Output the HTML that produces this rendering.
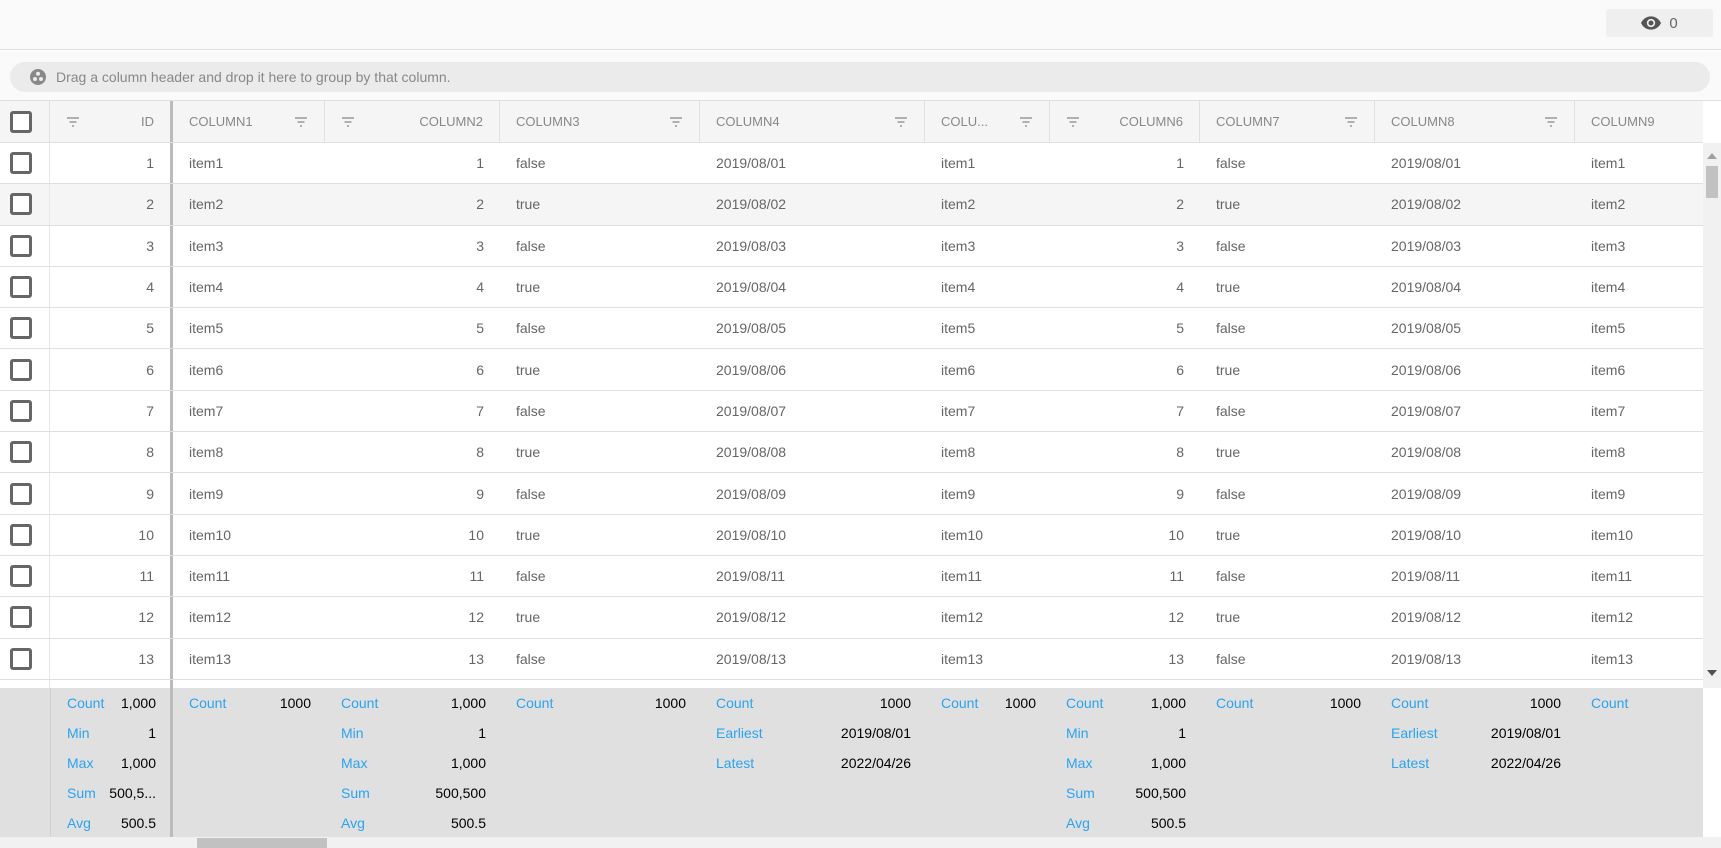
<!DOCTYPE html>
<html><head><meta charset="utf-8"><style>
*{box-sizing:border-box;margin:0;padding:0}
body{width:1721px;height:848px;overflow:hidden;background:#fff;font-family:"Liberation Sans",sans-serif;font-size:14px;color:#666;position:relative}
.top{position:absolute;left:0;top:0;width:1721px;height:50px;background:#fafafa;border-bottom:1px solid #e0e0e0}
.eye{position:absolute;left:1606px;top:9px;width:107px;height:28px;background:#efefef;border-radius:3px;display:flex;align-items:center;justify-content:center;gap:8px;color:#666;font-size:15px}
.grp{position:absolute;left:0;top:51px;width:1721px;height:50px;background:#fafafa;border-bottom:1px solid #e0e0e0}
.pill{position:absolute;left:10px;top:11px;width:1700px;height:30px;background:#ebebeb;border-radius:15px;display:flex;align-items:center;padding-left:20px;color:#888;font-size:14px}
.pill svg{margin-right:10px}
.row{position:absolute;left:0;width:1703px;display:flex;border-bottom:1px solid #e0e0e0}
.c{height:100%;display:flex;align-items:center;padding:0 16px;white-space:nowrap;overflow:hidden}
.r{justify-content:flex-end}
.hdr{top:101px;height:42px;background:#f5f5f5;color:#888;font-size:13px}
.hdr .c{border-right:1px solid #e0e0e0;justify-content:space-between}
.hdr .c.r{justify-content:space-between}
.w0{width:50px;padding:0 10px!important}.w1{width:123px;border-right:3px solid #bbb!important}.w2{width:152px}.w3{width:175px}.w4{width:200px}.w5{width:225px}.w6{width:125px}.w7{width:150px}.w8{width:175px}.w9{width:200px}.w10{width:128px}
.b .w0{border-right:1px solid #e8e8e8}
.cb{width:22px;height:22px;border:3px solid #666;border-radius:3px;background:#fff}
.f{display:inline-block;width:14px;height:10px}
.body{position:absolute;left:0;top:143px;width:1703px;height:545px;overflow:hidden}
.b{height:41.3px;position:relative}
.hov{background:#f5f5f5}
.foot{position:absolute;left:0;top:688px;width:1703px;height:149px;background:#e0e0e0;display:flex}
.foot>div{height:100%;padding-top:0}
.fl{display:flex;justify-content:space-between;height:30px;align-items:center;padding:0 14px 0 16px;color:#000}
.fl span:first-child{color:#2aa3f0}
.vs{position:absolute;left:1703px;top:143px;width:18px;height:545px;background:#f1f1f1}
.hs{position:absolute;left:0;top:837px;width:1721px;height:11px;background:#f1f1f1}
</style></head><body>
<div class="top"><div class="eye"><svg width="20" height="14" viewBox="0 0 24 16"><path d="M12 0C6.5 0 2.2 3.3 0 8c2.2 4.7 6.5 8 12 8s9.8-3.3 12-8C21.8 3.3 17.5 0 12 0zm0 13a5 5 0 110-10 5 5 0 010 10zm0-8a3 3 0 100 6 3 3 0 000-6z" fill="#555"/></svg><span>0</span></div></div>
<div class="grp"><div class="pill"><svg width="16" height="16" viewBox="0 0 16 16"><circle cx="8" cy="8" r="8" fill="#888"/><circle cx="8" cy="4.8" r="2" fill="#ebebeb"/><circle cx="5" cy="10" r="2" fill="#ebebeb"/><circle cx="11" cy="10" r="2" fill="#ebebeb"/></svg>Drag a column header and drop it here to group by that column.</div></div>

<div class="row hdr">
<div class="c w0"><div class="cb"></div></div>
<div class="c w1 r"><svg class="f" viewBox="0 0 14 10"><path d="M1 1h12M3.5 5h7M6 9h2" stroke="#888" stroke-width="1.2"/></svg><span>ID</span></div>
<div class="c w2"><span>COLUMN1</span><svg class="f" viewBox="0 0 14 10"><path d="M1 1h12M3.5 5h7M6 9h2" stroke="#888" stroke-width="1.2"/></svg></div>
<div class="c w3 r"><svg class="f" viewBox="0 0 14 10"><path d="M1 1h12M3.5 5h7M6 9h2" stroke="#888" stroke-width="1.2"/></svg><span>COLUMN2</span></div>
<div class="c w4"><span>COLUMN3</span><svg class="f" viewBox="0 0 14 10"><path d="M1 1h12M3.5 5h7M6 9h2" stroke="#888" stroke-width="1.2"/></svg></div>
<div class="c w5"><span>COLUMN4</span><svg class="f" viewBox="0 0 14 10"><path d="M1 1h12M3.5 5h7M6 9h2" stroke="#888" stroke-width="1.2"/></svg></div>
<div class="c w6"><span>COLU...</span><svg class="f" viewBox="0 0 14 10"><path d="M1 1h12M3.5 5h7M6 9h2" stroke="#888" stroke-width="1.2"/></svg></div>
<div class="c w7 r"><svg class="f" viewBox="0 0 14 10"><path d="M1 1h12M3.5 5h7M6 9h2" stroke="#888" stroke-width="1.2"/></svg><span>COLUMN6</span></div>
<div class="c w8"><span>COLUMN7</span><svg class="f" viewBox="0 0 14 10"><path d="M1 1h12M3.5 5h7M6 9h2" stroke="#888" stroke-width="1.2"/></svg></div>
<div class="c w9"><span>COLUMN8</span><svg class="f" viewBox="0 0 14 10"><path d="M1 1h12M3.5 5h7M6 9h2" stroke="#888" stroke-width="1.2"/></svg></div>
<div class="c w10" style="border-right:none"><span>COLUMN9</span></div>
</div>

<div class="body">
<div class="row b"><div class="c w0"><div class="cb"></div></div><div class="c w1 r">1</div><div class="c w2">item1</div><div class="c w3 r">1</div><div class="c w4">false</div><div class="c w5">2019/08/01</div><div class="c w6">item1</div><div class="c w7 r">1</div><div class="c w8">false</div><div class="c w9">2019/08/01</div><div class="c w10">item1</div></div>
<div class="row b hov"><div class="c w0"><div class="cb"></div></div><div class="c w1 r">2</div><div class="c w2">item2</div><div class="c w3 r">2</div><div class="c w4">true</div><div class="c w5">2019/08/02</div><div class="c w6">item2</div><div class="c w7 r">2</div><div class="c w8">true</div><div class="c w9">2019/08/02</div><div class="c w10">item2</div></div>
<div class="row b"><div class="c w0"><div class="cb"></div></div><div class="c w1 r">3</div><div class="c w2">item3</div><div class="c w3 r">3</div><div class="c w4">false</div><div class="c w5">2019/08/03</div><div class="c w6">item3</div><div class="c w7 r">3</div><div class="c w8">false</div><div class="c w9">2019/08/03</div><div class="c w10">item3</div></div>
<div class="row b"><div class="c w0"><div class="cb"></div></div><div class="c w1 r">4</div><div class="c w2">item4</div><div class="c w3 r">4</div><div class="c w4">true</div><div class="c w5">2019/08/04</div><div class="c w6">item4</div><div class="c w7 r">4</div><div class="c w8">true</div><div class="c w9">2019/08/04</div><div class="c w10">item4</div></div>
<div class="row b"><div class="c w0"><div class="cb"></div></div><div class="c w1 r">5</div><div class="c w2">item5</div><div class="c w3 r">5</div><div class="c w4">false</div><div class="c w5">2019/08/05</div><div class="c w6">item5</div><div class="c w7 r">5</div><div class="c w8">false</div><div class="c w9">2019/08/05</div><div class="c w10">item5</div></div>
<div class="row b"><div class="c w0"><div class="cb"></div></div><div class="c w1 r">6</div><div class="c w2">item6</div><div class="c w3 r">6</div><div class="c w4">true</div><div class="c w5">2019/08/06</div><div class="c w6">item6</div><div class="c w7 r">6</div><div class="c w8">true</div><div class="c w9">2019/08/06</div><div class="c w10">item6</div></div>
<div class="row b"><div class="c w0"><div class="cb"></div></div><div class="c w1 r">7</div><div class="c w2">item7</div><div class="c w3 r">7</div><div class="c w4">false</div><div class="c w5">2019/08/07</div><div class="c w6">item7</div><div class="c w7 r">7</div><div class="c w8">false</div><div class="c w9">2019/08/07</div><div class="c w10">item7</div></div>
<div class="row b"><div class="c w0"><div class="cb"></div></div><div class="c w1 r">8</div><div class="c w2">item8</div><div class="c w3 r">8</div><div class="c w4">true</div><div class="c w5">2019/08/08</div><div class="c w6">item8</div><div class="c w7 r">8</div><div class="c w8">true</div><div class="c w9">2019/08/08</div><div class="c w10">item8</div></div>
<div class="row b"><div class="c w0"><div class="cb"></div></div><div class="c w1 r">9</div><div class="c w2">item9</div><div class="c w3 r">9</div><div class="c w4">false</div><div class="c w5">2019/08/09</div><div class="c w6">item9</div><div class="c w7 r">9</div><div class="c w8">false</div><div class="c w9">2019/08/09</div><div class="c w10">item9</div></div>
<div class="row b"><div class="c w0"><div class="cb"></div></div><div class="c w1 r">10</div><div class="c w2">item10</div><div class="c w3 r">10</div><div class="c w4">true</div><div class="c w5">2019/08/10</div><div class="c w6">item10</div><div class="c w7 r">10</div><div class="c w8">true</div><div class="c w9">2019/08/10</div><div class="c w10">item10</div></div>
<div class="row b"><div class="c w0"><div class="cb"></div></div><div class="c w1 r">11</div><div class="c w2">item11</div><div class="c w3 r">11</div><div class="c w4">false</div><div class="c w5">2019/08/11</div><div class="c w6">item11</div><div class="c w7 r">11</div><div class="c w8">false</div><div class="c w9">2019/08/11</div><div class="c w10">item11</div></div>
<div class="row b"><div class="c w0"><div class="cb"></div></div><div class="c w1 r">12</div><div class="c w2">item12</div><div class="c w3 r">12</div><div class="c w4">true</div><div class="c w5">2019/08/12</div><div class="c w6">item12</div><div class="c w7 r">12</div><div class="c w8">true</div><div class="c w9">2019/08/12</div><div class="c w10">item12</div></div>
<div class="row b"><div class="c w0"><div class="cb"></div></div><div class="c w1 r">13</div><div class="c w2">item13</div><div class="c w3 r">13</div><div class="c w4">false</div><div class="c w5">2019/08/13</div><div class="c w6">item13</div><div class="c w7 r">13</div><div class="c w8">false</div><div class="c w9">2019/08/13</div><div class="c w10">item13</div></div>
<div class="row b"><div class="c w0"></div><div class="c w1 r"></div></div>
</div>

<div class="foot">
<div class="w0"></div>
<div class="w1" style="border-left:1px solid #d0d0d0;border-right:3px solid #bbb"><div class="fl"><span>Count</span><span>1,000</span></div><div class="fl"><span>Min</span><span>1</span></div><div class="fl"><span>Max</span><span>1,000</span></div><div class="fl"><span>Sum</span><span>500,5...</span></div><div class="fl"><span>Avg</span><span>500.5</span></div></div>
<div class="w2"><div class="fl"><span>Count</span><span>1000</span></div></div>
<div class="w3"><div class="fl"><span>Count</span><span>1,000</span></div><div class="fl"><span>Min</span><span>1</span></div><div class="fl"><span>Max</span><span>1,000</span></div><div class="fl"><span>Sum</span><span>500,500</span></div><div class="fl"><span>Avg</span><span>500.5</span></div></div>
<div class="w4"><div class="fl"><span>Count</span><span>1000</span></div></div>
<div class="w5"><div class="fl"><span>Count</span><span>1000</span></div><div class="fl"><span>Earliest</span><span>2019/08/01</span></div><div class="fl"><span>Latest</span><span>2022/04/26</span></div></div>
<div class="w6"><div class="fl"><span>Count</span><span>1000</span></div></div>
<div class="w7"><div class="fl"><span>Count</span><span>1,000</span></div><div class="fl"><span>Min</span><span>1</span></div><div class="fl"><span>Max</span><span>1,000</span></div><div class="fl"><span>Sum</span><span>500,500</span></div><div class="fl"><span>Avg</span><span>500.5</span></div></div>
<div class="w8"><div class="fl"><span>Count</span><span>1000</span></div></div>
<div class="w9"><div class="fl"><span>Count</span><span>1000</span></div><div class="fl"><span>Earliest</span><span>2019/08/01</span></div><div class="fl"><span>Latest</span><span>2022/04/26</span></div></div>
<div class="w10"><div class="fl"><span>Count</span><span></span></div></div>
</div>

<div class="vs">
<svg style="position:absolute;left:4px;top:10px" width="10" height="6"><path d="M0 6L5 0L10 6Z" fill="#a0a0a0"/></svg>
<div style="position:absolute;left:3px;top:23px;width:12px;height:32px;background:#c1c1c1"></div>
<svg style="position:absolute;left:4px;top:527px" width="10" height="6"><path d="M0 0L10 0L5 6Z" fill="#505050"/></svg>
</div>
<div class="hs"><div style="position:absolute;left:197px;top:1px;width:130px;height:10px;background:#c1c1c1"></div></div>
</body></html>
